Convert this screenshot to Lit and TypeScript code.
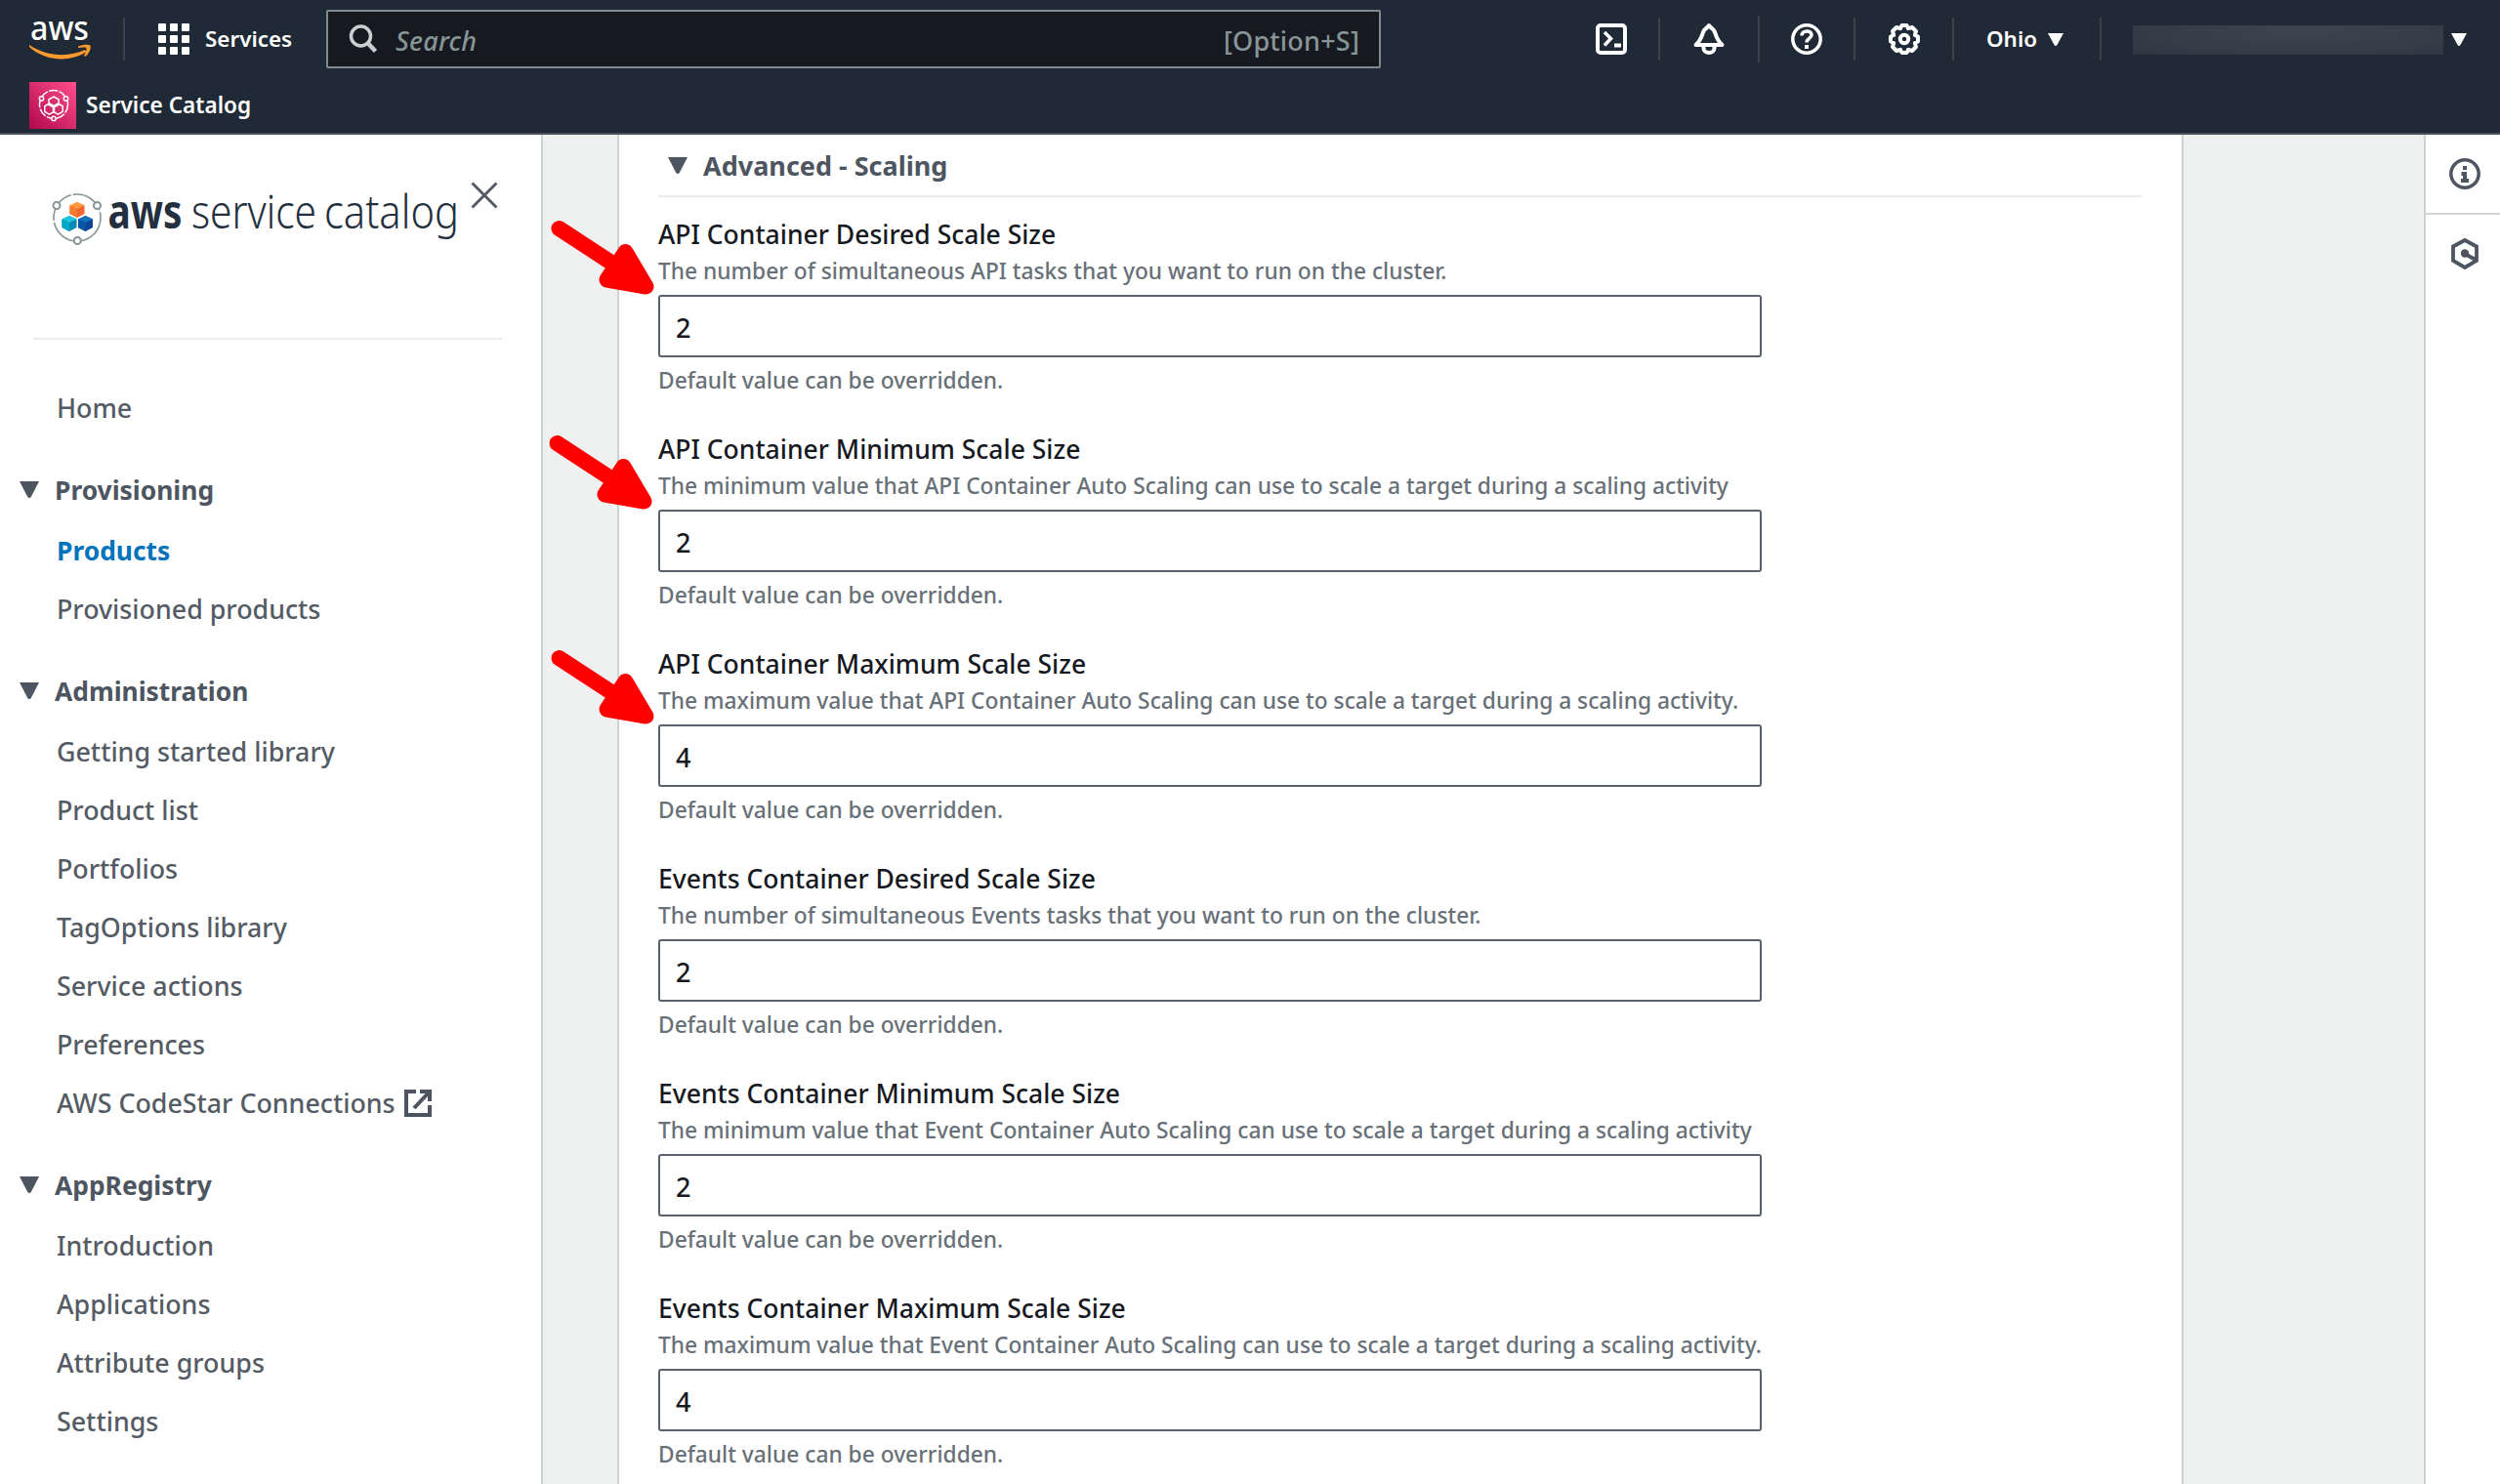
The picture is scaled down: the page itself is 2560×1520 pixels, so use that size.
import { LitElement, html, css, svg, nothing } from "lit";

interface Field { label: string; desc: string; value: string; arrow?: number }
interface Group { title?: string; links: string[] }

const FIELDS: Field[] = [
  { label: "API Container Desired Scale Size", desc: "The number of simultaneous API tasks that you want to run on the cluster.", value: "2", arrow: 0.5 },
  { label: "API Container Minimum Scale Size", desc: "The minimum value that API Container Auto Scaling can use to scale a target during a scaling activity", value: "2", arrow: -1.5 },
  { label: "API Container Maximum Scale Size", desc: "The maximum value that API Container Auto Scaling can use to scale a target during a scaling activity.", value: "4", arrow: 0.5 },
  { label: "Events Container Desired Scale Size", desc: "The number of simultaneous Events tasks that you want to run on the cluster.", value: "2" },
  { label: "Events Container Minimum Scale Size", desc: "The minimum value that Event Container Auto Scaling can use to scale a target during a scaling activity", value: "2" },
  { label: "Events Container Maximum Scale Size", desc: "The maximum value that Event Container Auto Scaling can use to scale a target during a scaling activity.", value: "4" },
];

const GROUPS: Group[] = [
  { links: ["Home"] },
  { title: "Provisioning", links: ["Products", "Provisioned products"] },
  { title: "Administration", links: ["Getting started library", "Product list", "Portfolios", "TagOptions library", "Service actions", "Preferences", "AWS CodeStar Connections"] },
  { title: "AppRegistry", links: ["Introduction", "Applications", "Attribute groups", "Settings"] },
];

const caret = (w: number, h: number) => svg`<svg class="caret" width=${w} height=${h} viewBox="0 0 20 16" preserveAspectRatio="none"><path d="M0 0h20l-8 14.500q-2 3-4 0z" fill="currentColor"/></svg>`;

const external = svg`<svg width="28" height="28" fill="none" stroke="#4d5560" stroke-width="4"><path d="M12 2H2v24h24V16"/><path d="M16 2h10v10M26 2L10 19"/></svg>`;

class AppRoot extends LitElement {
  static styles = css`
    :host { display: block; width: 2560px; height: 1520px; overflow: hidden; background: #fff; font-family: "Noto Sans", "Open Sans", sans-serif; font-weight: 500; color: #545b64; }
    * { box-sizing: border-box; }
    svg { display: block; flex: none; overflow: visible; }
    .page { display: flex; flex-direction: column; height: 1520px; }
    .top { height: 138px; flex: none; background: #202a36; border-bottom: 2px solid #4b525e; color: #fff; }
    .bar { display: flex; align-items: center; height: 80px; padding-left: 30px; }
    .aws { width: 64px; height: 42px; margin-top: 2px; }
    .sep { width: 2px; height: 44px; background: #3a424b; flex: none; }
    .sep1 { margin: 0 34px 0 32px; }
    .t { white-space: nowrap; }
    .svc { margin-left: 16px; width: 90px; font-size: 22.4px; font-weight: 600; line-height: 78px; }
    .search { display: flex; align-items: center; width: 1080px; height: 60px; margin-left: 34px; padding: 0 20px; border: 2px solid #7f8c8d; background: #16191f; border-radius: 2px; color: #879596; font-size: 27px; line-height: 56px; }
    .ph { flex: 1; margin-left: 17px; font-style: italic; padding-top: 3px; letter-spacing: 0.2px; }
    .opt { padding-top: 3px; letter-spacing: 0.2px; }
    .tools { display: flex; align-items: center; margin-left: 220px; }
    .tools .sep { margin: 0 34px; }
    .tools .sep:nth-of-type(1) { margin: 0 34px 0 32px; }
    .tools .sep:nth-of-type(2) { margin: 0 32px 0 34px; height: 48px; }
    .tools .sep:nth-of-type(3) { margin: 0 34px 0 32px; }
    .tools .sep:nth-of-type(4) { margin: 0 33px; }
    .ohio { width: 52px; font-size: 22.4px; font-weight: 600; line-height: 78px; }
    .caret-o { margin: 0 37px 0 11px; }
    .mask { width: 318px; height: 30px; margin: 2px 8px 0 32px; background: radial-gradient(ellipse at 55% 20%, #3d454f, #343d48 60%, #2d3641); }
    .fav { display: flex; align-items: flex-start; padding: 4px 0 0 30px; gap: 10px; font-size: 22.6px; font-weight: 600; line-height: 48px; height: 52px; }
    .body { display: flex; flex: 1; min-height: 0; }
    .side { width: 556px; flex: none; border-right: 2px solid #cdd2d2; }
    .brand { display: flex; height: 210px; margin: 0 40px 0 34px; border-bottom: 2px solid #eaeded; padding: 48px 0 0 19px; }
    .logo { margin-top: 10px; }
    .close { margin: 0 0 0 11px; }
    .wm { width: 358px; height: 80px; margin-left: 6px; }
    .nav { padding-top: 40px; font-size: 26.8px; line-height: 60px; }
    .nav h3 { display: flex; align-items: center; height: 62px; margin: 24px 0 0 20px; padding-bottom: 2px; gap: 16px; font-size: 26.4px; font-weight: 700; color: #4d5560; }
    .nav .caret { margin-top: -1px; }
    .link { display: flex; align-items: center; height: 60px; padding-left: 58px; gap: 9px; }
    .link.on { color: #0073bb; font-weight: 700; font-size: 26.4px; }
    .main { flex: 1; display: flex; justify-content: flex-start; background: #eff1f1; padding-left: 76px; }
    .card { width: 1604px; background: #fff; border: solid #cdd2d2; border-width: 0 2px; padding: 0 41px 0 40px; }
    .card h2 { display: flex; align-items: center; height: 64px; margin: 0 0 18px; padding-left: 10px; border-bottom: 2px solid #eaeded; gap: 16px; font-size: 27px; font-weight: 700; color: #4d5560; padding-top: 1px; }
    .field { position: relative; height: 220px; padding-top: 1px; }
    .label { font-size: 26.5px; line-height: 39px; color: #16191f; }
    .desc { font-size: 22.75px; line-height: 36px; color: #687078; }
    .input { width: 1130px; height: 64px; margin: 6px 0; padding: 1px 16px 0; border: 2px solid #59626c; border-radius: 3px; font-size: 27px; line-height: 62px; color: #16191f; }
    .arrow { position: absolute; top: 0; left: -118px; }
    .rail { width: 78px; flex: none; border-left: 2px solid #cdd2d2; color: #4d5560; }
    .rail div { display: flex; justify-content: center; align-items: center; height: 82px; padding-left: 4px; border-bottom: 2px solid #d0d5d5; }
    .rail div + div { border: 0; height: 80px; }
  `;

  render() {
    return html`<div class="page">
      <header class="top">
        <div class="bar">
          <svg class="aws" viewBox="0 0 64 42">
            <text x="1" y="21" font-size="35" textLength="60" lengthAdjust="spacingAndGlyphs" fill="#fff" font-weight="500">aws</text>
            <path d="M0 26C18 38 40 39 57 31l1.500 2C42 44 16 43 0 28z" fill="#ff9a2e"/>
            <path d="M50 27.500c5-2 10-2.500 12.500-1 1 3-1 8-5 11.500l-1.500-1c2-3.500 3-6 2.500-8-2-.8-5-.5-8.500 0z" fill="#ff9a2e"/>
          </svg>
          <i class="sep sep1"></i>
          <svg width="32" height="32" fill="#fff">${[0, 12, 24].map(y => [0, 12, 24].map(x => svg`<rect x=${x} y=${y} width="8" height="8" rx="1"/>`))}</svg>
          <span class="t svc">Services</span>
          <div class="search">
            <svg width="32" height="32" fill="none" stroke="#c9d0d0" stroke-width="3.500"><circle cx="13.500" cy="13" r="10"/><path d="M20.500 20L28.500 28.500" stroke-width="4.500"/></svg>
            <span class="t ph">Search</span><span class="t opt">[Option+S]</span>
          </div>
          <div class="tools">
            <svg width="32" height="32" fill="none" stroke="#fff" stroke-width="4"><rect x="2" y="2" width="28" height="28" rx="3"/><path d="M9 9l6.500 6.500L9 22.500" stroke-width="3.500"/><path d="M19 22.500h7" /></svg>
            <i class="sep"></i>
            <svg width="32" height="32" fill="none" stroke="#fff" stroke-width="4" stroke-linejoin="round"><path d="M2.500 22C7.500 17.500 8.500 13.500 10 9c1.200-3.500 3-3 6-7 3 4 4.800 3.500 6 7 1.500 4.500 2.500 8.500 7.500 13z"/><path d="M10.500 24v1.500a5.500 4.500 0 0 0 11 0V24" /></svg>
            <i class="sep"></i>
            <svg width="32" height="32" fill="none" stroke="#fff" stroke-width="3.500"><circle cx="16" cy="16" r="14.200"/><path d="M11 12.500c0-6 10-6 10-.8 0 3.800-5 3.800-5 7.800"/><path d="M16 22v4" stroke-width="4"/></svg>
            <i class="sep"></i>
            <svg width="32" height="32" fill="none" stroke="#fff" stroke-width="4" stroke-linejoin="round"><path d="M13.500 2h5l1.500 3.200 4-1.200 4 4-1.200 4L30 13.500v5L26.800 20l1.200 4-4 4-4-1.200-1.500 3.200h-5L12 26.800 8 28l-4-4 1.200-4L2 18.500v-5L5.200 12 4 8l4-4 4 1.200z"/><circle cx="16" cy="16" r="4.200"/></svg>
            <i class="sep"></i>
          </div>
          <span class="t ohio">Ohio</span>
          <span class="caret-o">${caret(16, 13)}</span>
          <i class="sep"></i>
          <div class="mask"></div>
          ${caret(16, 13)}
        </div>
        <div class="fav">
          <svg width="48" height="48" viewBox="0 0 48 48"><defs><linearGradient id="g" x1="0" y1="1" x2="1" y2="0"><stop offset="0" stop-color="#b0084d"/><stop offset="1" stop-color="#ff4f8b"/></linearGradient></defs>
            <rect width="48" height="48" fill="url(#g)"/>
            <g fill="none" stroke="#fff" stroke-width="1.500"><circle cx="25" cy="23" r="14.500" stroke-dasharray="9 1.500"/>
            <path d="M25 15l5 2.800v5.600l-5 2.800-5-2.800v-5.600zM20.500 22l5 2.800v5.600l-5 2.800-4.700-2.800v-5.600zM29.500 22l4.700 2.800v5.600l-4.700 2.800-5-2.800v-5.600z"/>
            <g fill="#e5286b"><circle cx="12.500" cy="17" r="2.200"/><circle cx="37.500" cy="17" r="2.200"/><circle cx="25" cy="37.500" r="2.200"/></g></g></svg>
          <span class="t">Service Catalog</span>
        </div>
      </header>
      <div class="body">
        <aside class="side">
          <div class="brand">
            <svg class="logo" width="54" height="58" viewBox="0 0 54 58">
              <g fill="none" stroke="#879596" stroke-width="1.600"><circle cx="26" cy="27" r="24" stroke-dasharray="34 2"/><g fill="#fff" stroke-width="2"><circle cx="5" cy="14.500" r="3.500"/><circle cx="46.500" cy="14.500" r="3.500"/><circle cx="26.300" cy="50.500" r="3.500"/></g></g>
              <path d="M26 11l7.500 3.500v8.500L26 27l-7.500-4v-8.500z" fill="#f26430"/><path d="M26 11l7.500 3.500L26 18l-7.500-3.500z" fill="#ff9a3d"/><path d="M26 18v9l-7.500-4v-8.500z" fill="#f97c2e"/>
              <path d="M18 25l7.500 3.500v8.500l-7.500 4-7.500-4v-8.500z" fill="#0389b3"/><path d="M18 25l7.500 3.500-7.500 3.500-7.500-3.500z" fill="#22c3dc"/><path d="M18 32v9l-7.500-4v-8.500z" fill="#00a9c9"/>
              <path d="M34.500 25l7.500 3.500v8.500L34.500 41l-7.500-4v-8.500z" fill="#0b4593"/><path d="M34.500 25l7.500 3.500L34.500 32l-7.500-3.500z" fill="#1374bd"/><path d="M34.500 32v9l-7.500-4v-8.500z" fill="#0a57a8"/>
            </svg>
            <svg class="wm" viewBox="0 0 358 80" fill="#232f3e">
              <text x="-2.500" y="48" font-size="48" font-weight="700" textLength="76" lengthAdjust="spacingAndGlyphs">aws</text>
              <text x="83" y="48" font-size="48" font-weight="300" textLength="128" lengthAdjust="spacingAndGlyphs">service</text>
              <text x="219" y="48" font-size="48" font-weight="300" textLength="138" lengthAdjust="spacingAndGlyphs">catalog</text>
            </svg>
            <svg class="close" width="28" height="28" stroke="#545b64" stroke-width="3"><path d="M1.500 1.500L26.500 26.500M26.500 1.500L1.500 26.500"/></svg>
          </div>
          <nav class="nav">
            ${GROUPS.map(g => html`
              ${g.title ? html`<h3>${caret(20, 17)}<span class="t">${g.title}</span></h3>` : nothing}
              ${g.links.map(s => html`<div class="link ${s === "Products" ? "on" : ""}"><span class="t">${s}</span>${s.startsWith("AWS") ? external : nothing}</div>`)}`)}
          </nav>
        </aside>
        <main class="main">
          <section class="card">
            <h2>${caret(20, 17)}<span class="t">Advanced - Scaling</span></h2>
            ${FIELDS.map(f => html`<div class="field">
              <div class="label t">${f.label}</div>
              <div class="desc t">${f.desc}</div>
              <div class="input">${f.value}</div>
              <div class="desc t">Default value can be overridden.</div>
              ${f.arrow === undefined ? nothing : svg`<svg class="arrow" width="120" height="90" viewBox=${`${-f.arrow} 0 120 90`} stroke="#f00" fill="#f00" stroke-width="16" stroke-linecap="round" stroke-linejoin="round"><path d="M16 14L74 52"/><path d="M84 38L65 66.500L105 73.500z"/></svg>`}
            </div>`)}
          </section>
        </main>
        <aside class="rail">
          <div><svg width="32" height="32" fill="none" stroke="currentColor" stroke-width="3.500"><circle cx="16" cy="16" r="14.200"/><path d="M16 8v4M12.500 16H16v8M12 23h8" stroke-width="4"/></svg></div>
          <div><svg width="32" height="32" fill="none" stroke="currentColor" stroke-width="3.800"><path d="M16 2L28 8.500V23L16 30 4 23V8.500z"/><circle cx="16" cy="15.500" r="4.200" fill="currentColor" stroke="none"/><path d="M16 16l11 6"/></svg></div>
        </aside>
      </div>
    </div>`;
  }
}
customElements.define("app-root", AppRoot);
